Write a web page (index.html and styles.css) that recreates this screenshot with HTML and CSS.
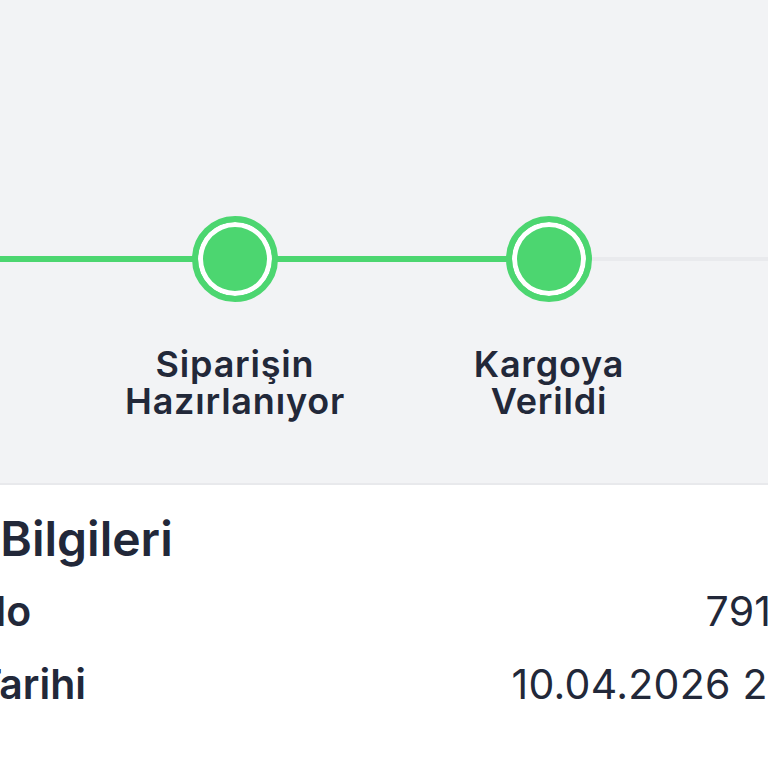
FILE: index.html
```html
<!DOCTYPE html>
<html lang="tr">
<head>
<meta charset="utf-8">
<link rel="stylesheet" href="styles.css">
</head>
<body>
<div class="viewport">
  <div class="page">
    <section class="tracker">
      <div class="steps">
        <div class="step done first">
          <div class="dot"></div>
          <div class="label">Sipariş<br>Alındı</div>
        </div>
        <div class="step done">
          <div class="dot"></div>
          <div class="label">Siparişin<br>Hazırlanıyor</div>
        </div>
        <div class="step done current">
          <div class="dot"></div>
          <div class="label">Kargoya<br>Verildi</div>
        </div>
        <div class="step todo last">
          <div class="dot"></div>
          <div class="label">Teslim<br>Edildi</div>
        </div>
      </div>
    </section>
    <section class="info">
      <h2 class="info-title">Sipariş Bilgileri</h2>
      <div class="row">
        <span class="key">Sipariş No</span>
        <span class="val">791534</span>
      </div>
      <div class="row">
        <span class="key">Sipariş Tarihi</span>
        <span class="val">10.04.2026 21:45</span>
      </div>
    </section>
  </div>
</div>
</body>
</html>
```

FILE: styles.css
```css
html, body {
  margin: 0;
  padding: 0;
  background: #ffffff;
}
body {
  font-family: Inter, "Noto Sans", sans-serif;
  color: #222839;
}
.viewport {
  width: 768px;
  height: 768px;
  overflow: hidden;
}
.page {
  width: 1256px;
  margin-left: -236px;
}
.tracker {
  background: #f2f3f5;
  height: 485px;
  border-bottom: 2px solid #e8e9ec;
  padding-top: 216px;
  box-sizing: border-box;
}
.steps {
  display: grid;
  grid-template-columns: repeat(4, 314px);
}
.step {
  display: flex;
  flex-direction: column;
  align-items: center;
  position: relative;
}
.step::before,
.step::after {
  content: "";
  position: absolute;
  top: 40px;
  height: 6px;
  width: 50%;
  background: #4cd670;
}
.step::before { left: 0; }
.step::after { right: 0; }
.step.current::after,
.step.todo::before,
.step.todo::after {
  background: #e9eaed;
  height: 4px;
  top: 41px;
}
.dot {
  width: 86px;
  height: 86px;
  box-sizing: border-box;
  border-radius: 50%;
  background: #4cd670;
  border: 6px solid #4cd670;
  box-shadow: inset 0 0 0 5px #ffffff;
  position: relative;
  z-index: 1;
}
.step.todo .dot {
  background: #e9eaed;
  border-color: #e9eaed;
}
.label {
  margin-top: 44px;
  font-size: 36px;
  line-height: 37px;
  font-weight: 600;
  text-align: center;
  letter-spacing: 0.8px;
}
.info {
  padding: 24px 171px 0 64px;
}
.info-title {
  margin: 0;
  font-size: 48px;
  line-height: 60px;
  font-weight: 600;
}
.row {
  display: flex;
  justify-content: space-between;
  align-items: baseline;
  font-size: 41px;
  line-height: 73px;
}
.row:first-of-type {
  margin-top: 6px;
}
.key { font-weight: 600; }
.key-tight { margin-left: -3px; }
.val { font-weight: 400; letter-spacing: 0.3px; }
```
